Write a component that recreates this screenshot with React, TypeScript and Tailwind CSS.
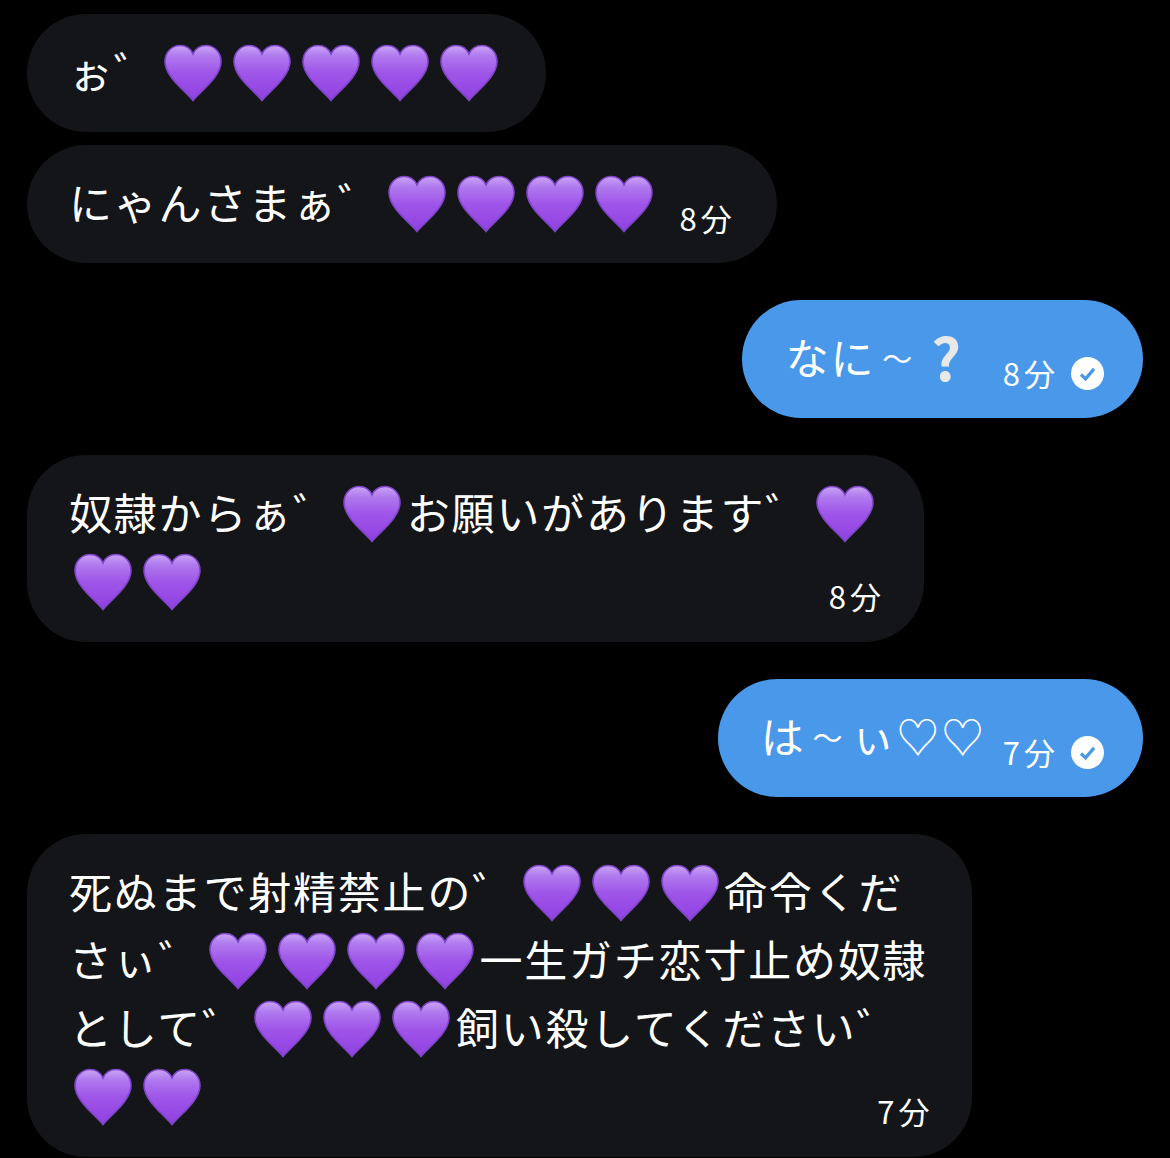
const font = { fontFamily: '"Noto Sans CJK JP", "Noto Sans", sans-serif' }

function Heart() {
  return (
    <svg viewBox="0 0 58 58" className="w-[58px] h-[58px] mx-[5.5px] shrink-0">
      <defs>
        <linearGradient id="heartFill" x1="0" y1="0" x2="0" y2="1">
          <stop offset="0" stopColor="#c9a4f5" />
          <stop offset="0.2" stopColor="#af78ee" />
          <stop offset="0.5" stopColor="#9f55e8" />
          <stop offset="1" stopColor="#9040e2" />
        </linearGradient>
      </defs>
      <path
        d="M29 56.5C22 47.5 1 33 1 17.5 1 8 8 1.5 16 1.5c5.8 0 10.6 3 13 8.5 2.4-5.5 7.2-8.5 13-8.5 8 0 15 6.5 15 16C57 33 36 47.5 29 56.5Z"
        fill="url(#heartFill)"
        stroke="#7f45c9"
        strokeWidth="1.6"
      />
    </svg>
  )
}

function Hearts({ n }: { n: number }) {
  return (
    <>
      {Array.from({ length: n }).map((_, i) => (
        <Heart key={i} />
      ))}
    </>
  )
}

function Check() {
  return (
    <svg viewBox="0 0 33 33" className="w-[33px] h-[33px] shrink-0">
      <circle cx="16.5" cy="16.5" r="16.5" fill="#ffffff" />
      <path d="M10 17.5l4.6 4.4 8.4-10" fill="none" stroke="#4a98ea" strokeWidth="3.2" />
    </svg>
  )
}

function Time({ children }: { children: string }) {
  return <span className="text-[31px] leading-none tracking-[4px] text-white translate-y-[13px]">{children}</span>
}

function T({ children }: { children: string }) {
  return <span className="-translate-y-[3px]">{children}</span>
}

function Wave() {
  return <span className="text-[30px] mx-[7px] -translate-y-[2px]">～</span>
}

function Row({ children, className = '' }: { children: React.ReactNode; className?: string }) {
  return <div className={`flex items-center h-[68px] whitespace-nowrap ${className}`}>{children}</div>
}

function Dark({ children, className = '' }: { children: React.ReactNode; className?: string }) {
  return (
    <div className={`self-start w-fit bg-[#141518] rounded-[59px] pl-[42px] py-[25px] ${className}`}>{children}</div>
  )
}

function Blue({ children, className = '' }: { children: React.ReactNode; className?: string }) {
  return (
    <div className={`self-end w-fit bg-[#4a98ea] rounded-[59px] py-[25px] pr-[39px] ${className}`}>
      <Row>{children}</Row>
    </div>
  )
}

export default function App() {
  return (
    <div
      className="h-[1158px] overflow-hidden bg-black text-white text-[43px] tracking-[1.8px] px-[27px] pt-[14px] flex flex-col"
      style={font}
    >
      <Dark className="pr-[42px]">
        <Row>
          <T>ぉ゛</T>
          <Hearts n={5} />
        </Row>
      </Dark>
      <Dark className="mt-[13px] pr-[41px]">
        <Row>
          <T>にゃんさまぁ゛</T>
          <Hearts n={4} />
          <span className="ml-[21px] flex">
            <Time>8分</Time>
          </span>
        </Row>
      </Dark>

      <Blue className="mt-[37px] pl-[44px]">
        <T>なに</T>
        <Wave />
        <span className="font-bold text-[#e8e8e8] text-[58px] ml-[10px] mr-[40px] -translate-y-[3px]">?</span>
        <Time>8分</Time>
        <span className="ml-[12px] translate-y-[14px] flex">
          <Check />
        </span>
      </Blue>

      <Dark className="mt-[37px] pr-[45px] pb-[26px]">
        <Row>
          <T>奴隷からぁ゛</T>
          <Heart />
          <T>お願いがあります゛</T>
          <Heart />
        </Row>
        <Row className="justify-between">
          <span className="flex -ml-[1px]">
            <Hearts n={2} />
          </span>
          <span className="flex -mr-[6px]">
            <Time>8分</Time>
          </span>
        </Row>
      </Dark>

      <Blue className="mt-[37px] pl-[43px]">
        <T>は</T>
        <Wave />
        <T>ぃ♡♡</T>
        <span className="ml-[17px] flex">
          <Time>7分</Time>
        </span>
        <span className="ml-[12px] translate-y-[14px] flex">
          <Check />
        </span>
      </Blue>

      <Dark className="mt-[37px] pr-[45px] pb-[26px]">
        <Row>
          <T>死ぬまで射精禁止の゛</T>
          <Hearts n={3} />
          <T>命令くだ</T>
        </Row>
        <Row>
          <T>さぃ゛</T>
          <Hearts n={4} />
          <T>一生ガチ恋寸止め奴隷</T>
        </Row>
        <Row>
          <T>として゛</T>
          <span className="flex ml-[2px]">
            <Hearts n={3} />
          </span>
          <T>飼い殺してください゛</T>
        </Row>
        <Row className="justify-between">
          <span className="flex -ml-[1px]">
            <Hearts n={2} />
          </span>
          <span className="flex -mr-[6px]">
            <Time>7分</Time>
          </span>
        </Row>
      </Dark>
    </div>
  )
}
